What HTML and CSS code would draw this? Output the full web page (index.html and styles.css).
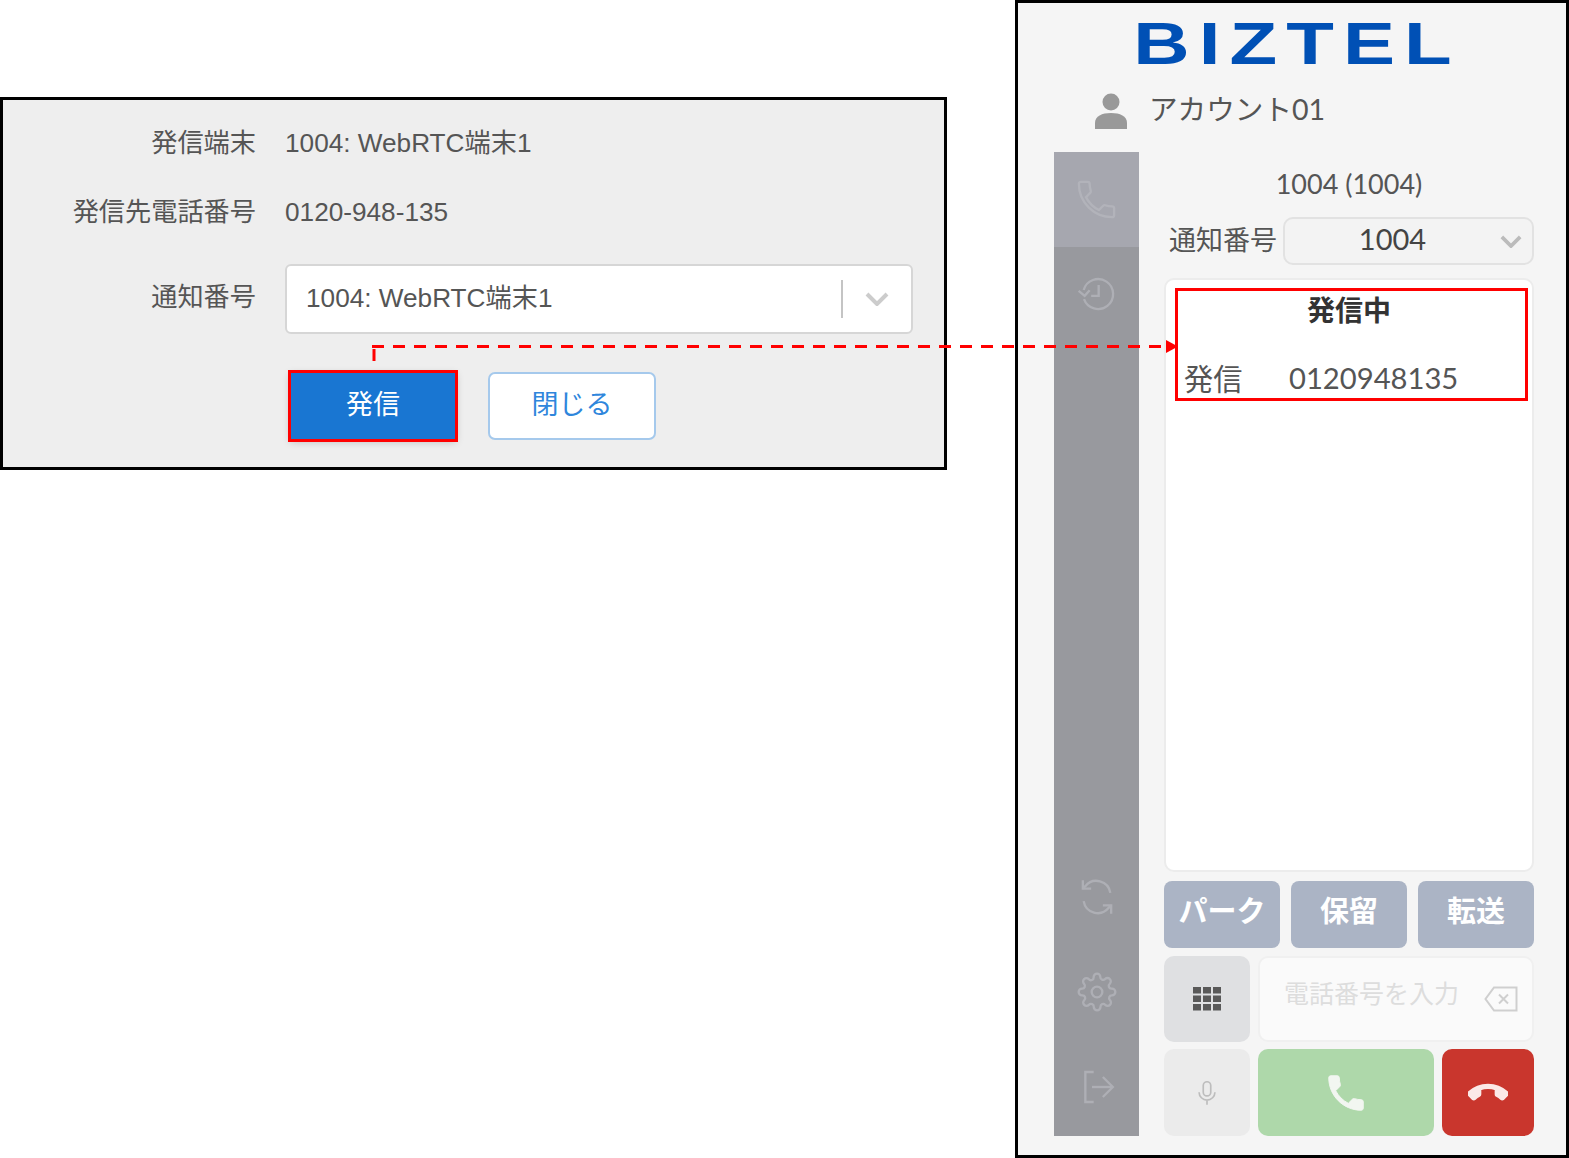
FILE: index.html
```html
<!DOCTYPE html>
<html lang="ja">
  <head>
    <meta charset="UTF-8" />
    <title>BIZTEL 発信</title>
    <link rel="stylesheet" href="styles.css">
  </head>
  <body>
    <div class="page">
      <div class="dialog">
        <div class="dialog-row row-one">
          <div class="dialog-label">発信端末</div>
          <div class="dialog-value">1004: WebRTC端末1</div>
        </div>
        <div class="dialog-row row-two">
          <div class="dialog-label">発信先電話番号</div>
          <div class="dialog-value">0120-948-135</div>
        </div>
        <div class="dialog-row row-three">
          <div class="dialog-label">通知番号</div>
          <div class="dialog-select">
            <span class="dialog-select-text">1004: WebRTC端末1</span>
            <span class="dialog-select-sep"></span>
            <svg class="dialog-chevron" viewBox="0 0 24 14"><path d="M2 2l10 10L22 2"/></svg>
          </div>
        </div>
        <div class="dialog-buttons">
          <button class="btn-call">発信</button>
          <button class="btn-close">閉じる</button>
        </div>
      </div>

      <div class="softphone">
        <div class="logo"><span class="logo-text">BIZTEL</span></div>
        <div class="account">
          <svg class="account-icon" viewBox="0 0 32 36">
            <circle cx="16" cy="9" r="8.5"/>
            <path d="M0 36v-6c0-7 7-10 16-10s16 3 16 10v6z"/>
          </svg>
          <span class="account-name">アカウント01</span>
        </div>
        <div class="phone-body">
          <div class="sidebar">
            <div class="side-item active">
              <svg class="side-phone" viewBox="0 0 24 24"><path d="M6.62 10.79c1.44 2.83 3.76 5.14 6.59 6.59l2.2-2.2c.27-.27.67-.36 1.02-.24 1.12.37 2.33.57 3.57.57.55 0 1 .45 1 1V20c0 .55-.45 1-1 1-9.39 0-17-7.61-17-17 0-.55.45-1 1-1h3.500c.55 0 1 .45 1 1 0 1.250.2 2.450.57 3.570.11.35.03.74-.25 1.020l-2.2 2.2z"/></svg>
            </div>
            <div class="side-item">
              <svg viewBox="0 0 24 24"><path d="M4.2 14.5A9 9 0 1 0 4 9"/><path d="M1 9.5l3.6 3 3-3.4"/><path d="M13 6v6.5H8.5"/></svg>
            </div>
            <div class="side-spacer"></div>
            <div class="side-item">
              <svg viewBox="0 0 24 24"><path d="M20 9.5A8.500 8.500 0 0 0 5 5.500L3.500 7"/><path d="M3.500 2v5h5"/><path d="M4 14.500A8.500 8.500 0 0 0 19 18.500l1.500-1.500"/><path d="M20.500 22v-5h-5"/></svg>
            </div>
            <div class="side-item">
              <svg viewBox="0 0 24 24"><circle cx="12" cy="12" r="3.2"/><path d="M19.4 15a1.65 1.65 0 0 0 .33 1.82l.06.06a2 2 0 1 1-2.83 2.83l-.06-.06a1.65 1.65 0 0 0-2.82 1.17V21a2 2 0 1 1-4 0v-.09A1.65 1.65 0 0 0 7.2 19.7l-.06.06a2 2 0 1 1-2.83-2.83l.06-.06A1.65 1.65 0 0 0 3.2 14H3a2 2 0 1 1 0-4h.09A1.65 1.65 0 0 0 4.3 7.2l-.06-.06a2 2 0 1 1 2.83-2.83l.06.06A1.65 1.65 0 0 0 10 3.2V3a2 2 0 1 1 4 0v.09a1.65 1.65 0 0 0 2.8 1.17l.06-.06a2 2 0 1 1 2.83 2.83l-.06.06A1.65 1.65 0 0 0 20.8 10H21a2 2 0 1 1 0 4h-.09a1.65 1.65 0 0 0-1.51 1z"/></svg>
            </div>
            <div class="side-item">
              <svg viewBox="0 0 24 24"><path d="M10 3H5v18h5"/><path d="M9 12h12"/><path d="M15.500 6L21.500 12l-6 6"/></svg>
            </div>
          </div>

          <div class="main">
            <div class="extension">1004 (1004)</div>
            <div class="notify-row">
              <span class="notify-label">通知番号</span>
              <div class="notify-select">
                <span class="notify-value">1004</span>
                <svg class="notify-chevron" viewBox="0 0 24 14"><path d="M2 2l10 10L22 2"/></svg>
              </div>
            </div>
            <div class="call-card">
              <div class="call-title">発信中</div>
              <div class="call-row">
                <span class="call-label">発信</span>
                <span class="call-number">0120948135</span>
              </div>
              <div class="call-mark"></div>
            </div>
            <div class="action-row">
              <div class="action-btn">パーク</div>
              <div class="action-btn">保留</div>
              <div class="action-btn">転送</div>
            </div>
            <div class="dial-row">
              <div class="square-btn keypad">
                <svg viewBox="0 0 28 24">
                  <rect x="0" y="0" width="8" height="6.5"/><rect x="10" y="0" width="8" height="6.5"/><rect x="20" y="0" width="8" height="6.5"/>
                  <rect x="0" y="8.5" width="8" height="6.5"/><rect x="10" y="8.5" width="8" height="6.5"/><rect x="20" y="8.5" width="8" height="6.5"/>
                  <rect x="0" y="17" width="8" height="6.5"/><rect x="10" y="17" width="8" height="6.5"/><rect x="20" y="17" width="8" height="6.5"/>
                </svg>
              </div>
              <div class="dial-input">
                <span class="dial-placeholder">電話番号を入力</span>
                <svg class="dial-back" viewBox="0 0 34 26"><path d="M10 1.500h22.500v23H10L1.500 13z"/><path d="M15 8.500l9 9M24 8.500l-9 9"/></svg>
              </div>
            </div>
            <div class="call-buttons">
              <div class="square-btn mic">
                <svg viewBox="0 0 24 30"><rect x="7.500" y="1.500" width="9" height="17" rx="4.500"/><path d="M2.500 14a9.500 9.500 0 0 0 19 0M12 24v5"/></svg>
              </div>
              <div class="btn-dial">
                <svg viewBox="0 0 24 24"><path d="M6.620 10.790c1.440 2.830 3.760 5.140 6.590 6.590l2.200-2.200c.27-.27.67-.36 1.020-.24 1.120.37 2.330.57 3.570.57.55 0 1 .45 1 1V20c0 .55-.45 1-1 1-9.390 0-17-7.610-17-17 0-.55.45-1 1-1h3.500c.55 0 1 .45 1 1 0 1.250.2 2.450.57 3.570.11.35.03.74-.25 1.020l-2.200 2.200z"/></svg>
              </div>
              <div class="btn-hangup">
                <svg viewBox="0 0 24 24"><path d="M12 9c-1.6 0-3.15.25-4.6.72v3.1c0 .39-.23.74-.56.9-.98.49-1.87 1.12-2.66 1.85-.18.18-.43.28-.7.28-.28 0-.53-.11-.71-.29L.29 13.08c-.18-.17-.29-.42-.29-.7 0-.28.11-.53.29-.71C3.34 8.78 7.46 7 12 7s8.66 1.78 11.71 4.67c.18.18.29.43.29.71 0 .28-.11.53-.29.71l-2.48 2.48c-.18.18-.43.29-.71.29-.27 0-.52-.11-.7-.28-.79-.74-1.69-1.36-2.67-1.85-.33-.16-.56-.5-.56-.9v-3.1C15.15 9.25 13.6 9 12 9z"/></svg>
              </div>
            </div>
          </div>
        </div>
      </div>

      <!-- dashed arrow from the call button to the softphone -->
      <svg class="connector" viewBox="0 0 1569 1158">
        <path class="connector-line" d="M374 349V365"/>
        <path class="connector-line" d="M372 346.500H1166"/>
        <path class="connector-head" d="M1166 340l12 6.500-12 6.500z"/>
      </svg>
    </div>
  </body>
</html>
```

FILE: styles.css
```css
* {
  margin: 0;
  padding: 0;
  box-sizing: border-box;
}

body {
  background: #ffffff;
  font-family: 'Liberation Sans', 'Noto Sans CJK JP', sans-serif;
  color: #555555;
  overflow: hidden;
}

.page {
  position: relative;
  width: 1569px;
  height: 1158px;
  display: flex;
  align-items: flex-start;
}

/* Left: outgoing call dialog */
.dialog {
  width: 947px;
  height: 373px;
  margin-top: 97px;
  margin-right: 68px;
  padding-top: 21px;
  background: #eeeeee;
  border: 3px solid #000000;
  flex-shrink: 0;
}

.dialog-row {
  display: grid;
  grid-template-columns: 253px 628px;
  column-gap: 29px;
  align-items: center;
  font-size: 26.2px;
}

.row-one,
.row-two {
  height: 40px;
}

.row-two {
  margin-top: 29px;
}

.row-two .dialog-value {
  margin-top: 4px;
}

.row-three {
  height: 70px;
  margin-top: 34px;
}

.dialog-label {
  text-align: right;
}

.row-three .dialog-label {
  margin-top: -8px;
}

.dialog-select {
  height: 70px;
  display: flex;
  align-items: center;
  padding-left: 19px;
  background: #ffffff;
  border: 2px solid #d6d6d6;
  border-radius: 6px;
}

.dialog-select-text {
  flex: 1;
  padding-bottom: 6px;
}

.dialog-select-sep {
  width: 2px;
  height: 38px;
  background: #c4c4c4;
}

.dialog-chevron {
  width: 24px;
  height: 14px;
  margin: 0 22px;
  fill: none;
  stroke: #cccccc;
  stroke-width: 4;
}

.dialog-buttons {
  display: flex;
  gap: 32px;
  margin-top: 38px;
  margin-left: 287px;
}

.dialog-buttons button {
  height: 68px;
  padding-bottom: 8px;
  font-family: inherit;
  font-size: 27px;
}

.btn-call {
  width: 166px;
  color: #ffffff;
  background: #1976d2;
  border: none;
  outline: 3px solid #ff0000;
  outline-offset: -1px;
  box-shadow: 0 2px 8px rgba(0, 0, 0, 0.2);
}

.btn-close {
  width: 168px;
  color: #2f86dc;
  background: #ffffff;
  border: 2px solid #a5c9ec;
  border-radius: 7px;
}

/* Right: softphone */
.softphone {
  width: 554px;
  height: 1158px;
  padding: 0 30px 19px 36px;
  display: flex;
  flex-direction: column;
  background: #f5f5f5;
  border: 3px solid #000000;
  flex-shrink: 0;
}

.logo {
  height: 60px;
  margin: 11px -30px 0 -36px;
  text-align: center;
  line-height: 60px;
}

.logo-text {
  display: inline-block;
  font-size: 60px;
  font-weight: 700;
  color: #0050b5;
  letter-spacing: 7px;
  transform: translateX(5px) scaleX(1.3);
}

.account {
  display: flex;
  align-items: center;
  gap: 22px;
  height: 40px;
  margin-top: 16px;
  margin-bottom: 22px;
  padding-left: 41px;
  font-family: Lato, 'Noto Sans CJK JP', sans-serif;
  font-size: 28.6px;
}

.account-name {
  margin-top: -6px;
}

.account-icon {
  width: 32px;
  height: 36px;
  margin-top: 1px;
  fill: #999999;
}

.phone-body {
  flex: 1;
  display: flex;
  gap: 25px;
}

.sidebar {
  width: 85px;
  padding-bottom: 2px;
  display: flex;
  flex-direction: column;
  background: #98999e;
}

.side-item {
  height: 95px;
  display: flex;
  align-items: center;
  justify-content: center;
}

.side-item.active {
  background: #a6a7af;
}

.side-spacer {
  flex: 1;
}

.side-item svg {
  width: 40px;
  height: 40px;
  fill: none;
  stroke: #aeafb5;
  stroke-width: 1.4;
}

.side-item .side-phone {
  width: 47px;
  height: 47px;
  stroke: #b2b3ba;
  stroke-width: 1.2;
}

.main {
  width: 370px;
  display: flex;
  flex-direction: column;
  font-family: Lato, 'Noto Sans CJK JP', sans-serif;
}

.extension {
  height: 32px;
  margin-top: 16px;
  text-align: center;
  font-size: 27px;
  line-height: 32px;
}

.notify-row {
  display: flex;
  align-items: center;
  height: 48px;
  margin-top: 17px;
  padding-left: 5px;
}

.notify-label {
  width: 114px;
  margin-top: -6px;
  font-size: 27px;
  white-space: nowrap;
}

.notify-select {
  flex: 1;
  height: 48px;
  display: flex;
  align-items: center;
  background: #f3f3f3;
  border: 2px solid #e2e2e2;
  border-radius: 10px;
}

.notify-value {
  flex: 1;
  margin-top: -5px;
  text-align: center;
  font-size: 29px;
  color: #444444;
}

.notify-chevron {
  width: 22px;
  height: 13px;
  margin-right: 10px;
  fill: none;
  stroke: #bbbbbb;
  stroke-width: 4;
}

.call-card {
  position: relative;
  flex: 1;
  margin-top: 13px;
  background: #ffffff;
  border: 2px solid #ececec;
  border-radius: 10px;
}

.call-title {
  height: 40px;
  margin-top: 10px;
  text-align: center;
  font-size: 28px;
  font-weight: 700;
  line-height: 40px;
  color: #333333;
}

.call-row {
  display: flex;
  align-items: center;
  height: 40px;
  margin-top: 27px;
  padding-left: 18px;
  font-size: 29.2px;
}

.call-label {
  width: 105px;
}

/* red annotation box */
.call-mark {
  position: absolute;
  top: 8px;
  left: 9px;
  width: 353px;
  height: 113px;
  border: 3px solid #ff0000;
}

.action-row {
  display: flex;
  gap: 11px;
  height: 67px;
  margin-top: 9px;
}

.action-btn {
  flex: 1;
  display: flex;
  align-items: center;
  justify-content: center;
  padding-bottom: 12px;
  background: #abb4c5;
  border-radius: 8px;
  color: #ffffff;
  font-size: 29px;
  font-weight: 700;
}

.dial-row,
.call-buttons {
  display: flex;
  gap: 8px;
}

.dial-row {
  height: 86px;
  margin-top: 8px;
}

.call-buttons {
  height: 87px;
  margin-top: 7px;
}

.square-btn {
  width: 86px;
  display: flex;
  align-items: center;
  justify-content: center;
  border-radius: 10px;
}

.keypad {
  background: #dfe0e2;
}

.keypad svg {
  width: 28px;
  height: 24px;
  fill: #595959;
}

.dial-input {
  flex: 1;
  display: flex;
  align-items: center;
  padding-left: 24px;
  background: #fafafa;
  border: 2px solid #f0f0f0;
  border-radius: 10px;
}

.dial-placeholder {
  flex: 1;
  margin-top: -15px;
  font-size: 25px;
  color: #dddddd;
}

.dial-back {
  width: 34px;
  height: 26px;
  margin-right: 14px;
  fill: none;
  stroke: #cfcfcf;
  stroke-width: 2;
}

.mic {
  background: #ebebeb;
}

.mic svg {
  width: 20px;
  height: 26px;
  fill: none;
  stroke: #bdbdbd;
  stroke-width: 2;
}

.btn-dial {
  width: 176px;
  display: flex;
  align-items: center;
  justify-content: center;
  background: #aed8aa;
  border-radius: 10px;
}

.btn-dial svg {
  width: 46px;
  height: 46px;
  fill: #f2f6f1;
  stroke: #f2f6f1;
  stroke-width: 0.5;
}

.btn-hangup {
  flex: 1;
  display: flex;
  align-items: center;
  justify-content: center;
  background: #c9362d;
  border-radius: 10px;
}

.btn-hangup svg {
  width: 40px;
  height: 40px;
  fill: #fbe9e7;
  stroke: #fbe9e7;
  stroke-width: 1.2;
}

/* annotation overlay */
.connector {
  position: absolute;
  top: 0;
  left: 0;
  width: 1569px;
  height: 1158px;
  pointer-events: none;
}

.connector-line {
  fill: none;
  stroke: #ff0000;
  stroke-width: 3;
  stroke-dasharray: 12 9;
}

.connector-head {
  fill: #ff0000;
}
```
